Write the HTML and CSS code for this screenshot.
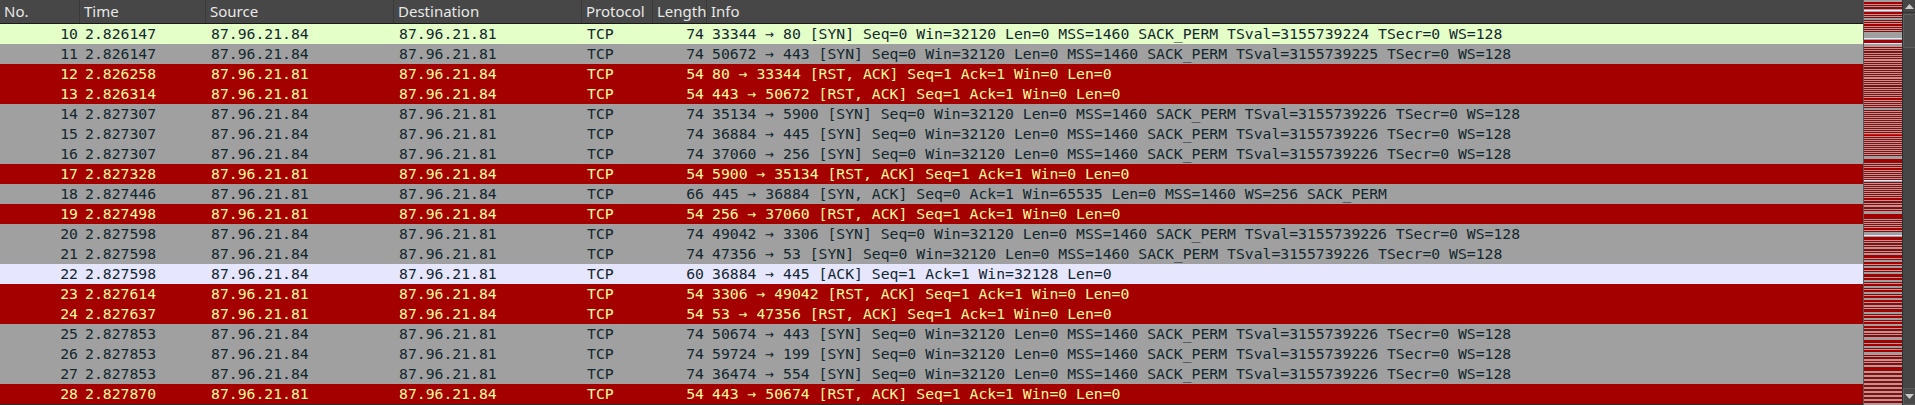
FILE: index.html
```html
<!DOCTYPE html>
<html>
<head>
<meta charset="utf-8">
<link rel="stylesheet" href="styles.css">
</head>
<body>
<div class="app">
  <div class="list">
    <div class="row head">
      <div class="c no">No.</div><div class="c">Time</div><div class="c">Source</div><div class="c">Destination</div><div class="c">Protocol</div><div class="c">Length</div><div class="c">Info</div>
    </div>
    <div class="row http"><div class="c no">10</div><div class="c">2.826147</div><div class="c">87.96.21.84</div><div class="c">87.96.21.81</div><div class="c">TCP</div><div class="c len">74</div><div class="c">33344 → 80 [SYN] Seq=0 Win=32120 Len=0 MSS=1460 SACK_PERM TSval=3155739224 TSecr=0 WS=128</div></div>
    <div class="row syn"><div class="c no">11</div><div class="c">2.826147</div><div class="c">87.96.21.84</div><div class="c">87.96.21.81</div><div class="c">TCP</div><div class="c len">74</div><div class="c">50672 → 443 [SYN] Seq=0 Win=32120 Len=0 MSS=1460 SACK_PERM TSval=3155739225 TSecr=0 WS=128</div></div>
    <div class="row rst"><div class="c no">12</div><div class="c">2.826258</div><div class="c">87.96.21.81</div><div class="c">87.96.21.84</div><div class="c">TCP</div><div class="c len">54</div><div class="c">80 → 33344 [RST, ACK] Seq=1 Ack=1 Win=0 Len=0</div></div>
    <div class="row rst"><div class="c no">13</div><div class="c">2.826314</div><div class="c">87.96.21.81</div><div class="c">87.96.21.84</div><div class="c">TCP</div><div class="c len">54</div><div class="c">443 → 50672 [RST, ACK] Seq=1 Ack=1 Win=0 Len=0</div></div>
    <div class="row syn"><div class="c no">14</div><div class="c">2.827307</div><div class="c">87.96.21.84</div><div class="c">87.96.21.81</div><div class="c">TCP</div><div class="c len">74</div><div class="c">35134 → 5900 [SYN] Seq=0 Win=32120 Len=0 MSS=1460 SACK_PERM TSval=3155739226 TSecr=0 WS=128</div></div>
    <div class="row syn"><div class="c no">15</div><div class="c">2.827307</div><div class="c">87.96.21.84</div><div class="c">87.96.21.81</div><div class="c">TCP</div><div class="c len">74</div><div class="c">36884 → 445 [SYN] Seq=0 Win=32120 Len=0 MSS=1460 SACK_PERM TSval=3155739226 TSecr=0 WS=128</div></div>
    <div class="row syn"><div class="c no">16</div><div class="c">2.827307</div><div class="c">87.96.21.84</div><div class="c">87.96.21.81</div><div class="c">TCP</div><div class="c len">74</div><div class="c">37060 → 256 [SYN] Seq=0 Win=32120 Len=0 MSS=1460 SACK_PERM TSval=3155739226 TSecr=0 WS=128</div></div>
    <div class="row rst"><div class="c no">17</div><div class="c">2.827328</div><div class="c">87.96.21.81</div><div class="c">87.96.21.84</div><div class="c">TCP</div><div class="c len">54</div><div class="c">5900 → 35134 [RST, ACK] Seq=1 Ack=1 Win=0 Len=0</div></div>
    <div class="row syn"><div class="c no">18</div><div class="c">2.827446</div><div class="c">87.96.21.81</div><div class="c">87.96.21.84</div><div class="c">TCP</div><div class="c len">66</div><div class="c">445 → 36884 [SYN, ACK] Seq=0 Ack=1 Win=65535 Len=0 MSS=1460 WS=256 SACK_PERM</div></div>
    <div class="row rst"><div class="c no">19</div><div class="c">2.827498</div><div class="c">87.96.21.81</div><div class="c">87.96.21.84</div><div class="c">TCP</div><div class="c len">54</div><div class="c">256 → 37060 [RST, ACK] Seq=1 Ack=1 Win=0 Len=0</div></div>
    <div class="row syn"><div class="c no">20</div><div class="c">2.827598</div><div class="c">87.96.21.84</div><div class="c">87.96.21.81</div><div class="c">TCP</div><div class="c len">74</div><div class="c">49042 → 3306 [SYN] Seq=0 Win=32120 Len=0 MSS=1460 SACK_PERM TSval=3155739226 TSecr=0 WS=128</div></div>
    <div class="row syn"><div class="c no">21</div><div class="c">2.827598</div><div class="c">87.96.21.84</div><div class="c">87.96.21.81</div><div class="c">TCP</div><div class="c len">74</div><div class="c">47356 → 53 [SYN] Seq=0 Win=32120 Len=0 MSS=1460 SACK_PERM TSval=3155739226 TSecr=0 WS=128</div></div>
    <div class="row tcp"><div class="c no">22</div><div class="c">2.827598</div><div class="c">87.96.21.84</div><div class="c">87.96.21.81</div><div class="c">TCP</div><div class="c len">60</div><div class="c">36884 → 445 [ACK] Seq=1 Ack=1 Win=32128 Len=0</div></div>
    <div class="row rst"><div class="c no">23</div><div class="c">2.827614</div><div class="c">87.96.21.81</div><div class="c">87.96.21.84</div><div class="c">TCP</div><div class="c len">54</div><div class="c">3306 → 49042 [RST, ACK] Seq=1 Ack=1 Win=0 Len=0</div></div>
    <div class="row rst"><div class="c no">24</div><div class="c">2.827637</div><div class="c">87.96.21.81</div><div class="c">87.96.21.84</div><div class="c">TCP</div><div class="c len">54</div><div class="c">53 → 47356 [RST, ACK] Seq=1 Ack=1 Win=0 Len=0</div></div>
    <div class="row syn"><div class="c no">25</div><div class="c">2.827853</div><div class="c">87.96.21.84</div><div class="c">87.96.21.81</div><div class="c">TCP</div><div class="c len">74</div><div class="c">50674 → 443 [SYN] Seq=0 Win=32120 Len=0 MSS=1460 SACK_PERM TSval=3155739226 TSecr=0 WS=128</div></div>
    <div class="row syn"><div class="c no">26</div><div class="c">2.827853</div><div class="c">87.96.21.84</div><div class="c">87.96.21.81</div><div class="c">TCP</div><div class="c len">74</div><div class="c">59724 → 199 [SYN] Seq=0 Win=32120 Len=0 MSS=1460 SACK_PERM TSval=3155739226 TSecr=0 WS=128</div></div>
    <div class="row syn"><div class="c no">27</div><div class="c">2.827853</div><div class="c">87.96.21.84</div><div class="c">87.96.21.81</div><div class="c">TCP</div><div class="c len">74</div><div class="c">36474 → 554 [SYN] Seq=0 Win=32120 Len=0 MSS=1460 SACK_PERM TSval=3155739226 TSecr=0 WS=128</div></div>
    <div class="row rst"><div class="c no">28</div><div class="c">2.827870</div><div class="c">87.96.21.81</div><div class="c">87.96.21.84</div><div class="c">TCP</div><div class="c len">54</div><div class="c">443 → 50674 [RST, ACK] Seq=1 Ack=1 Win=0 Len=0</div></div>
  </div>
  <div class="minimap" id="minimap"></div>
  <div class="scrollbar">
    <div class="btn up"><svg width="11" height="7" viewBox="0 0 11 7"><path d="M1 6 L5.5 1 L10 6 Z" fill="#c8c8c8"/></svg></div>
    <div class="track"><div class="thumb"></div></div>
    <div class="btn down"><svg width="11" height="7" viewBox="0 0 11 7"><path d="M1 1 L5.5 6 L10 1 Z" fill="#c8c8c8"/></svg></div>
  </div>
</div>
<script src="script.js"></script>
</body>
</html>
```

FILE: styles.css
```css
html, body {
  margin: 0;
  padding: 0;
  background: #2d2d2d;
}
.app {
  display: flex;
  width: 1915px;
  height: 405px;
  overflow: hidden;
}
.list {
  width: 1863px;
  flex: none;
  display: flex;
  flex-direction: column;
  background: #2d2d2d;
}
.row {
  display: grid;
  grid-template-columns: 80px 126px 188px 188px 71px 54px 1fr;
  height: 20px;
  line-height: 20px;
  font-family: "DejaVu Sans Mono", monospace;
  font-size: 14.75px;
  white-space: nowrap;
}
.c {
  padding-left: 5px;
  overflow: hidden;
}
.c.no {
  padding-left: 0;
  padding-right: 2px;
  text-align: right;
}
.c.len {
  padding-right: 3px;
  text-align: right;
}
.row.head {
  height: 23px;
  line-height: 22px;
  background: #474747;
  border-bottom: 1px solid #1a1a1a;
  color: #e8e8e8;
  font-family: "Noto Sans", "Open Sans", sans-serif;
  font-size: 15px;
}
.row.head .c {
  border-right: 1px solid #3a3a3a;
  padding-left: 4px;
  text-align: left;
}
.row.head .c.no {
  padding-left: 4px;
  padding-right: 0;
}
.row.head .c:last-child {
  border-right: none;
}
.row.http { background: #e4ffc7; color: #12272e; }
.row.syn { background: #a0a0a0; color: #12272e; }
.row.tcp { background: #e7e6ff; color: #12272e; }
.row.rst { background: #a40000; color: #fffc9c; }

.minimap {
  width: 38px;
  flex: none;
  border-left: 1px solid #5a5a5a;
  display: flex;
  flex-direction: column;
  background: #a0a0a0;
}
.mm { flex: none; }
.mm.r { background: #a40000; }
.mm.g { background: #a0a0a0; }
.mm.w { background: #e7e6ff; }
.mm.l { background: #e4ffc7; }
.mm.b { background: #d01818; }

.scrollbar {
  width: 13px;
  flex: none;
  display: flex;
  flex-direction: column;
  background: #464646;
  border-left: 1px solid #2e2e2e;
}
.btn {
  height: 12px;
  display: flex;
  align-items: center;
  justify-content: center;
  flex: none;
}
.btn.up {
  border-bottom: 1px solid #333;
}
.btn.down {
  height: 15px;
  border: 1px solid #5c5c5c;
  background: #4a4a4a;
}
.track {
  flex: 1;
  padding-top: 1px;
}
.thumb {
  height: 32px;
  background: #4d4d4d;
  border: 1px solid #5e5e5e;
  border-radius: 1px;
}
```

FILE: script.js
```js
(function () {
  var spec = "g2r2g1r1g1r2g1w1g1r2g1r1g1r1g2r1g1r1g1r2g1r1g1r1g1r1g6w1g1r3w1g3" +
    "r1g1r1g1r2g1r1g1r1g1r1g2r1g1r1g1r1g1r2g1r1g1r1g1r1g1r1g2r1g1r1g1r1g1r2g1r1g1r1g1r1g1r1g1r1g1r2g1r1g1r1g1r1g1r1g1" +
    "g1r1g1r1g1r1g1r1g1r1g1r1g1r1g1r1g1r1g1r1g1r1g1r1g1b1r1g1r1g1r1g1r1g1r1g1r1g1r1g1r1g1r1g1r1g1r1" +
    "g3r4g1r1g1r1g1r2g1r1g1r1g1r1g1r1g1r1w1g1r1g1r1g1r1g1r1g1r1g1r1g1r1g1r1g1r2g1r2g1r1g2r2g1r1g3r5g1r1g1r1g1r1g1r1g1r2g1r1g3w1g1r1" +
    "r2g1r1g1r2g1r1g2r2g1r1g2r3g1r1g2r2g1r1g2r2g1r1g2r3g1r2g2r1g1r2g2r1g1r2g2r1g1r2g2r2g1r2g2r1g1r3g2r1g1r2g2r1g1r2g2r2g1r2g2r1g1r2g3r3g1r2g2r1g1r2g3r1g1r2g2r1g1r2g2r2";
  var host = document.getElementById("minimap");
  var total = 0;
  var re = /([a-z])(\d+)/g, m;
  while ((m = re.exec(spec)) && total < 405) {
    var h = parseInt(m[2], 10);
    var d = document.createElement("div");
    d.className = "mm " + m[1];
    d.style.height = h + "px";
    host.appendChild(d);
    total += h;
  }
  var i = 0;
  while (total < 405) {
    var d2 = document.createElement("div");
    d2.className = "mm " + (i % 2 ? "g" : "r");
    d2.style.height = "2px";
    host.appendChild(d2);
    total += 2; i++;
  }
})();
```
